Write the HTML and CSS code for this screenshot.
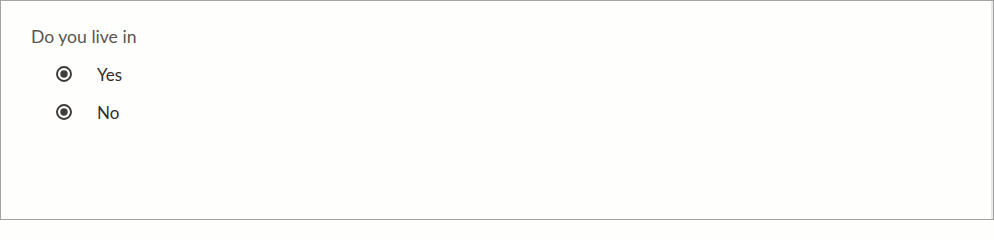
FILE: index.html
```html
<!DOCTYPE html>
<html>
<head>
<meta charset="utf-8">
<link rel="stylesheet" href="styles.css">
</head>
<body>
<div class="frame">
  <fieldset class="question">
    <legend class="question-label">Do you live in</legend>
    <label class="option">
      <svg class="radio" width="18" height="18" viewBox="0 0 18 18"><circle cx="9" cy="9" r="7" fill="none" stroke="#3a3836" stroke-width="1.9"/><circle cx="9" cy="9" r="3.7" fill="#3f3d3b"/></svg>
      <span class="option-text">Yes</span>
    </label>
    <label class="option">
      <svg class="radio" width="18" height="18" viewBox="0 0 18 18"><circle cx="9" cy="9" r="7" fill="none" stroke="#3a3836" stroke-width="1.9"/><circle cx="9" cy="9" r="3.7" fill="#3f3d3b"/></svg>
      <span class="option-text">No</span>
    </label>
  </fieldset>
</div>
</body>
</html>
```
FILE: styles.css
```css
html, body {
  margin: 0;
  padding: 0;
  height: 100%;
  overflow: hidden;
}
body {
  font-family: Lato, "Noto Sans", sans-serif;
  background: #fefefc;
}
.frame {
  box-sizing: border-box;
  width: 994px;
  height: 220px;
  border: 1px solid #a3a3a3;
  box-shadow: inset -2px 0 0 #e6e6e6;
  background: #fefefc;
  padding: 24px 0 0 30px;
}
.question {
  border: 0;
  margin: 0;
  padding: 0;
  display: flex;
  flex-direction: column;
}
.question-label {
  padding: 0;
  font-size: 17.6px;
  line-height: 24px;
  color: #5a5651;
  margin-bottom: 6px;
}
.option {
  display: flex;
  align-items: center;
  height: 38px;
  padding-left: 24px;
  color: #302e2c;
  font-size: 17px;
}
.radio {
  display: block;
  flex: none;
  margin-right: 24px;
}
```
